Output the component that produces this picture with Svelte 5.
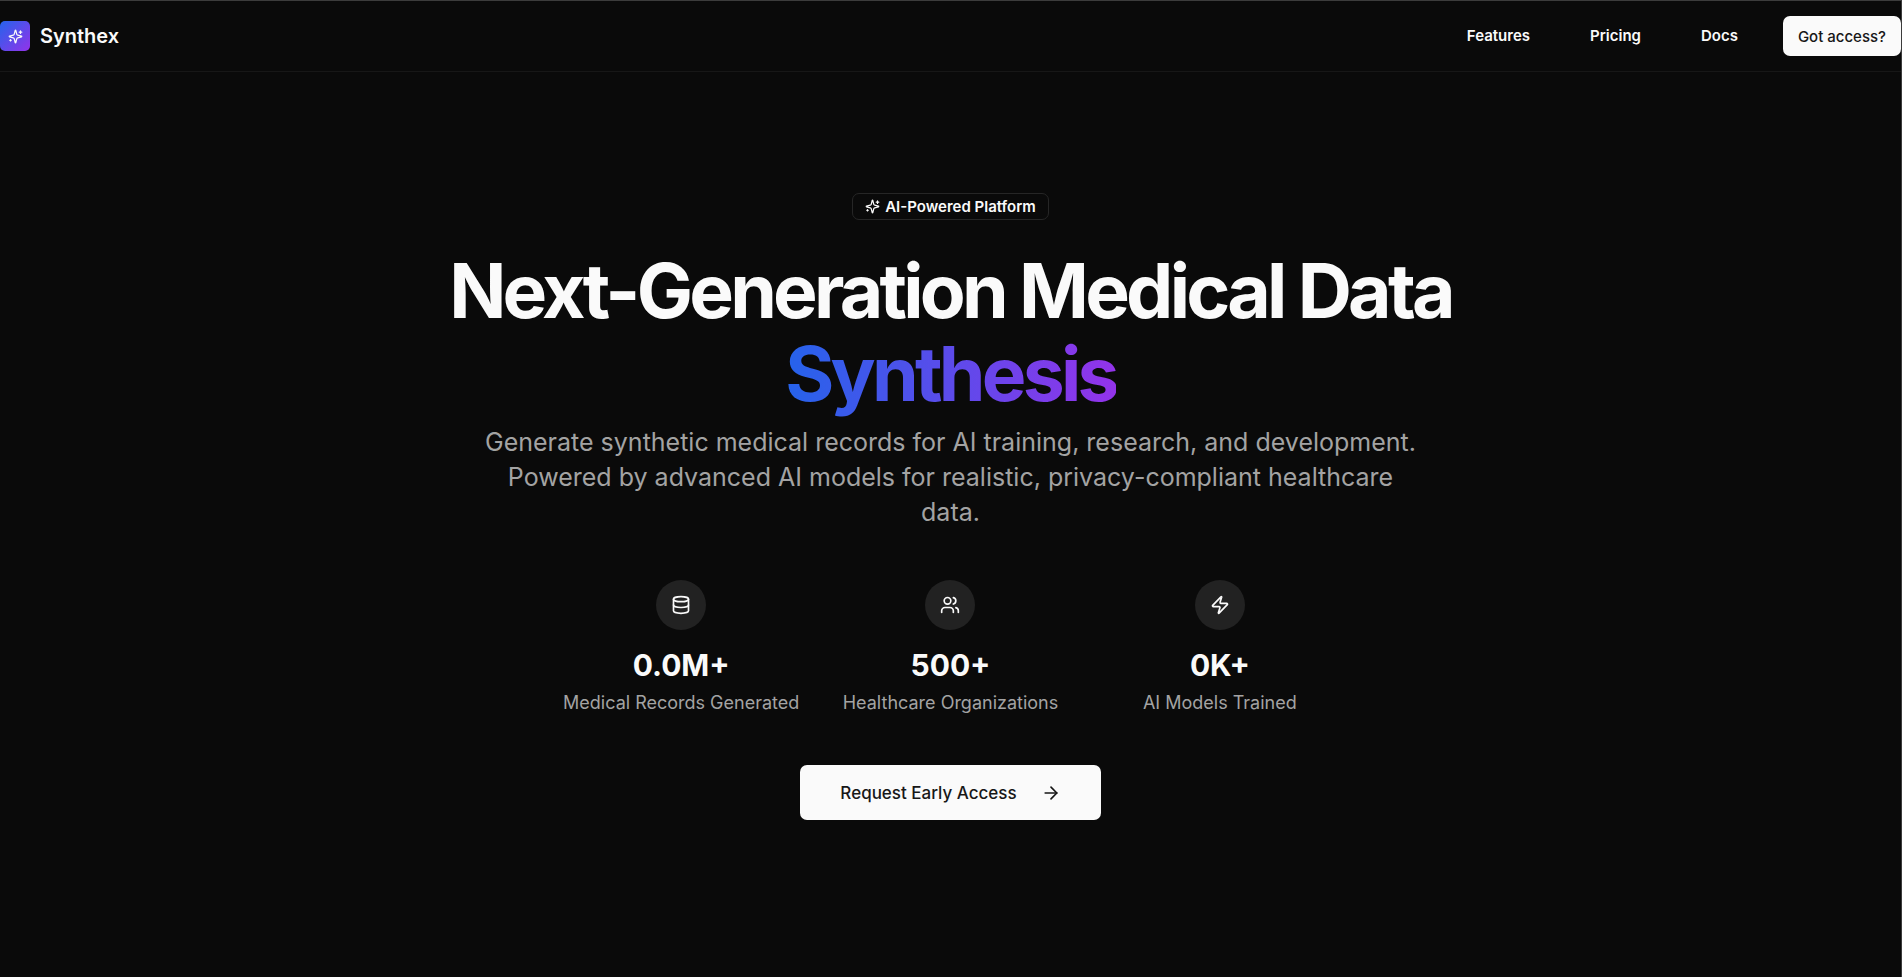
<script lang="ts">
  const navLinks = [
    { label: "Features", href: "#features" },
    { label: "Pricing", href: "#pricing" },
    { label: "Docs", href: "#docs" },
  ];

  const stats = [
    { icon: "database", value: "0.0M+", label: "Medical Records Generated" },
    { icon: "users", value: "500+", label: "Healthcare Organizations" },
    { icon: "zap", value: "0K+", label: "AI Models Trained" },
  ];
</script>

{#snippet icon(name: string)}
  <svg class="icon" viewBox="0 0 24 24" aria-hidden="true">
    {#if name === "sparkles"}
      <path
        d="M9.937 15.5A2 2 0 0 0 8.5 14.063l-6.135-1.582a.5.5 0 0 1 0-.962L8.5 9.936A2 2 0 0 0 9.937 8.5l1.582-6.135a.5.5 0 0 1 .963 0L14.063 8.5A2 2 0 0 0 15.5 9.937l6.135 1.581a.5.5 0 0 1 0 .964L15.5 14.063a2 2 0 0 0-1.437 1.437l-1.582 6.135a.5.5 0 0 1-.963 0z"
      />
      <path d="M20 3v4" />
      <path d="M22 5h-4" />
      <path d="M4 17v2" />
      <path d="M5 18H3" />
    {:else if name === "database"}
      <ellipse cx="12" cy="5" rx="9" ry="3" />
      <path d="M3 5V19A9 3 0 0 0 21 19V5" />
      <path d="M3 12A9 3 0 0 0 21 12" />
    {:else if name === "users"}
      <path d="M16 21v-2a4 4 0 0 0-4-4H6a4 4 0 0 0-4 4v2" />
      <circle cx="9" cy="7" r="4" />
      <path d="M22 21v-2a4 4 0 0 0-3-3.87" />
      <path d="M16 3.13a4 4 0 0 1 0 7.75" />
    {:else if name === "zap"}
      <path
        d="M4 14a1 1 0 0 1-.78-1.63l9.9-10.2a.5.5 0 0 1 .86.46l-1.92 6.02A1 1 0 0 0 13 10h7a1 1 0 0 1 .78 1.63l-9.9 10.2a.5.5 0 0 1-.86-.46l1.92-6.02A1 1 0 0 0 11 14z"
      />
    {:else if name === "arrow"}
      <path d="M5 12h14" />
      <path d="m12 5 7 7-7 7" />
    {/if}
  </svg>
{/snippet}

<div class="page">
  <header class="header">
    <a class="brand" href="#home">
      <span class="brand-mark">{@render icon("sparkles")}</span>
      <span>Synthex</span>
    </a>
    <div class="actions">
      <nav class="nav">
        {#each navLinks as link}
          <a href={link.href}>{link.label}</a>
        {/each}
      </nav>
      <button class="button login" type="button">Got access?</button>
    </div>
  </header>

  <main class="hero">
    <div class="badge">
      {@render icon("sparkles")}
      <span>AI-Powered Platform</span>
    </div>

    <h1>Next-Generation Medical Data <span class="gradient">Synthesis</span></h1>

    <p class="lead">
      Generate synthetic medical records for AI training, research, and
      development. Powered by advanced AI models for realistic,
      privacy-compliant healthcare data.
    </p>

    <div class="stats">
      {#each stats as stat}
        <div class="stat">
          <div class="stat-icon">{@render icon(stat.icon)}</div>
          <div class="stat-value">{stat.value}</div>
          <div class="stat-label">{stat.label}</div>
        </div>
      {/each}
    </div>

    <button class="button cta" type="button">
      <span>Request Early Access</span>
      {@render icon("arrow")}
    </button>
  </main>
</div>

<style>
  :global(body) {
    background: #0a0a0a;
  }

  .page {
    box-sizing: border-box;
    min-height: 100vh;
    border-top: 1px solid #3c3c3c;
    border-right: 1px solid #3c3c3c;
    background: #0a0a0a;
    color: #fafafa;
    font-family: Inter, sans-serif;
    font-size: 15px;
    line-height: 20px;
  }

  .icon {
    display: block;
    flex: none;
    width: 15px;
    height: 15px;
    fill: none;
    stroke: currentColor;
    stroke-width: 2;
    stroke-linecap: round;
    stroke-linejoin: round;
  }

  .header {
    display: flex;
    align-items: center;
    justify-content: space-between;
    height: 70px;
    border-bottom: 1px solid #171717;
  }

  .brand {
    display: flex;
    align-items: center;
    gap: 10px;
    color: inherit;
    font-size: 20px;
    font-weight: 600;
    text-decoration: none;
  }

  .brand-mark {
    display: grid;
    place-items: center;
    width: 30px;
    height: 30px;
    border-radius: 5px;
    background: linear-gradient(to bottom right, #2563eb, #9333ea);
  }

  .actions {
    display: flex;
    align-items: center;
    gap: 30px;
  }

  .nav {
    display: flex;
    gap: 30px;
  }

  .nav a {
    padding: 10px 15px;
    color: inherit;
    font-weight: 600;
    text-decoration: none;
  }

  .button {
    display: flex;
    align-items: center;
    justify-content: center;
    border: 0;
    border-radius: 7px;
    background: #fafafa;
    color: #171717;
    font-family: inherit;
    font-weight: 500;
    cursor: pointer;
  }

  .login {
    height: 40px;
    padding: 0 15px;
    font-size: 15px;
  }

  .hero {
    display: flex;
    flex-direction: column;
    align-items: center;
    padding: 121px 20px;
    text-align: center;
  }

  .badge {
    display: flex;
    align-items: center;
    gap: 5px;
    padding: 3px 12px;
    border: 1px solid #262626;
    border-radius: 7px;
    font-weight: 600;
    line-height: 19px;
  }

  h1 {
    max-width: 1120px;
    margin: 29px 0 10px;
    font-size: 75px;
    font-weight: 700;
    line-height: 83px;
    letter-spacing: -0.05em;
  }

  .gradient {
    background: linear-gradient(to right, #2563eb, #9333ea);
    background-clip: text;
    color: transparent;
  }

  .lead {
    max-width: 940px;
    margin: 0;
    color: #a3a3a3;
    font-size: 25px;
    line-height: 35px;
  }

  .stats {
    display: grid;
    grid-template-columns: repeat(3, 1fr);
    gap: 40px;
    width: 100%;
    max-width: 768px;
    margin: 50px 0;
  }

  .stat {
    display: flex;
    flex-direction: column;
    align-items: center;
    min-width: 0;
  }

  .stat-icon {
    display: grid;
    place-items: center;
    width: 50px;
    height: 50px;
    border-radius: 50%;
    background: #222222;
  }

  .stat-icon .icon,
  .cta .icon {
    width: 20px;
    height: 20px;
  }

  .stat-value {
    margin: 15px 0 5px;
    font-size: 30px;
    font-weight: 700;
    line-height: 40px;
  }

  .stat-label {
    color: #a3a3a3;
    font-size: 18px;
    line-height: 25px;
    white-space: nowrap;
  }

  .cta {
    gap: 24px;
    height: 55px;
    padding: 0 40px;
    font-size: 17px;
  }
</style>
